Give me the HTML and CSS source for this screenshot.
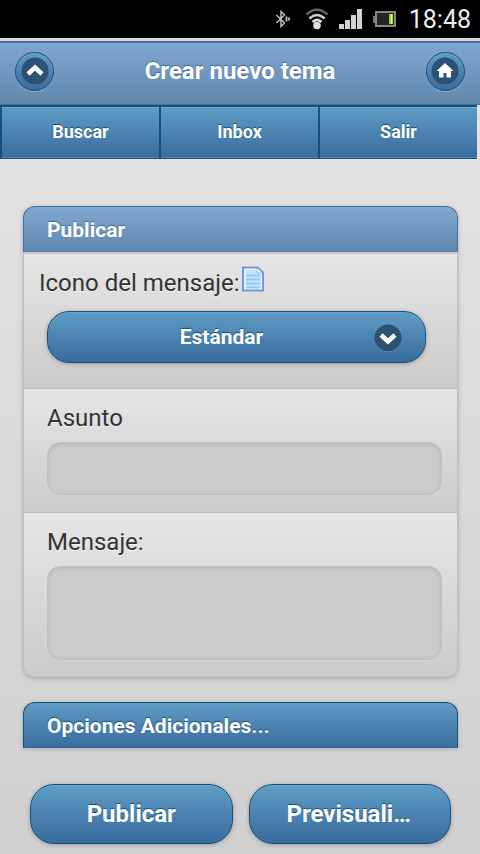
FILE: index.html
```html
<!DOCTYPE html>
<html lang="es">
<head>
<meta charset="utf-8">
<meta name="viewport" content="width=device-width, initial-scale=1">
<title>Crear nuevo tema</title>
<link rel="stylesheet" href="styles.css">
</head>
<body>
<div class="status">
  <svg width="18" height="18" viewBox="0 0 18 18" fill="none" stroke="#c4c4c4" stroke-width="1.400"><path d="M1.500 5l8 8-3.500 3.500V1.500L9.500 5l-8 8"/><path d="M11.500 6.500v5M14 7.500v3" stroke-width="1.800"/></svg>
  <svg class="wifi" width="24" height="22" viewBox="0 0 24 22" fill="none" stroke-width="2.600"><path d="M1.500 6.500Q12-3 22.500 6.500" stroke="#666"/><path d="M4.500 10.500Q12 3.500 19.500 10.500" stroke="#ccc"/><path d="M7.500 14Q12 9.500 16.500 14" stroke="#ddd"/><circle cx="12" cy="17.500" r="3.800" fill="#ddd"/></svg>
  <svg class="signal" width="24" height="20" viewBox="0 0 24 20" fill="#d4d4d4"><path d="M0 15h5v5H0zM6 11h5v9H6zM12 6h5v14h-5zM18 0h5v20h-5z"/></svg>
  <svg class="battery" width="24" height="17" viewBox="0 0 24 17"><path d="M0 5h3v7H0z" fill="#777"/><rect x="3" y="1" width="19" height="14" fill="#252525" stroke="#888" stroke-width="2"/><path d="M16 3h4v10h-4z" fill="#9bd51d"/><path d="M18 3h1v10h-1z" fill="#d9ff70"/></svg>
  <span class="clock">18:48</span>
</div>
<header class="bar">
  <a class="round" href="#subir" aria-label="Subir"><svg width="28" height="28" viewBox="0 0 28 28"><circle cx="14" cy="14" r="13.500" fill="#2b5272"/><path d="M7 17l7-6.500 7 6.500" fill="none" stroke="#fff" stroke-width="4.500"/></svg></a>
  <h1>Crear nuevo tema</h1>
  <a class="round" href="#inicio" aria-label="Inicio"><svg width="28" height="28" viewBox="0 0 28 28"><circle cx="14" cy="14" r="13.500" fill="#2b5272"/><path d="M14 6l8.500 8h-2.500v6.500h-4.500V16h-3v4.500H8V14H5.500z" fill="#fff"/></svg></a>
</header>
<nav class="tabs"><a href="#buscar">Buscar</a><a href="#inbox">Inbox</a><a href="#salir">Salir</a></nav>
<main>
  <form>
    <div class="card">
      <h2 class="heading">Publicar</h2>
      <div class="row first">
        <div class="line"><label for="icono">Icono del mensaje:</label><svg width="24" height="26" viewBox="0 0 24 26"><path d="M2 1.500h14.500l5.500 5v18H2z" fill="#eaf6ff" stroke="#6f9cd9" stroke-width="2"/><path d="M4.500 4H15v4h5v14H4.500z" fill="#c6e5fd"/><path d="M16 2v5h5" fill="#fff" stroke="#86b0e2"/><path d="M5 9.500h14M5 13.500h14M5 17.500h14M5 21.500h14" stroke="#8ccbfa" stroke-width="2"/></svg></div>
        <div class="picker">
          <select id="icono"><option>Estándar</option></select>
          <svg class="arrow" width="28" height="28" viewBox="0 0 28 28"><circle cx="14" cy="15" r="13" fill="#7fa9cc"/><circle cx="14" cy="14" r="13.500" fill="#2b5272"/><path d="M7 11l7 6.500 7-6.500" fill="none" stroke="#fff" stroke-width="4.500"/></svg>
        </div>
      </div>
      <div class="row">
        <label for="asunto">Asunto</label>
        <input id="asunto" type="text">
      </div>
      <div class="row">
        <label for="mensaje">Mensaje:</label>
        <textarea id="mensaje"></textarea>
      </div>
    </div>
    <h2 class="heading options"><a href="#opciones">Opciones Adicionales...</a></h2>
    <div class="actions">
      <button type="submit"><span>Publicar</span></button>
      <button type="button"><span>Previsualizar</span></button>
    </div>
  </form>
</main>
</body>
</html>
```
FILE: styles.css
```css
* { box-sizing: border-box; }
body {
  margin: 0;
  min-height: 100vh;
  font-family: Roboto, sans-serif;
  font-size: 24px;
  color: #333;
  text-shadow: 0 1px 0 #f3f3f3;
  background: linear-gradient(#e6e6e6, #d0d0d0);
}
svg { display: block; flex: none; }
a { color: inherit; text-decoration: none; }

.status {
  display: flex;
  align-items: center;
  justify-content: flex-end;
  height: 38px;
  padding-right: 9px;
  background: #000;
  color: #eee;
  text-shadow: none;
}
.wifi { margin-left: 12px; }
.signal { margin-left: 10px; }
.battery { margin-left: 10px; }
.clock { margin-left: 12px; font-size: 25px; }

.bar {
  display: flex;
  align-items: center;
  justify-content: space-between;
  height: 67px;
  padding: 0 15px;
  border-top: 3px solid #d8d6cf;
  background: linear-gradient(#81a8d0, #5e87ae);
  box-shadow: inset 0 2px 0 #456f9f, inset 0 -1px 0 #457492;
}
h1, h2 { margin: 0; font-weight: 700; color: #fff; }
h1 {
  margin-bottom: 4px;
  font-size: 24px;
  line-height: 32px;
  text-shadow: 0 -1px 1px #3e6790;
}
.round {
  display: grid;
  place-items: center;
  width: 39px;
  height: 39px;
  margin-bottom: 4px;
  border: 1px solid #145072;
  border-radius: 50%;
  background: linear-gradient(#5f9cc5, #396b9e);
  box-shadow: 0 1px 1px #8db4d4, inset 0 1px 0 #78afd0;
}

.tabs {
  display: grid;
  grid-template-columns: repeat(3, minmax(0, 1fr));
  margin-right: 3px;
}
.tabs a {
  height: 54px;
  border-top: 2px solid #155078;
  border-bottom: 1px solid #155078;
  border-left: 2px solid #155078;
  background: linear-gradient(#5f9cc5, #396b9e);
  box-shadow: inset 0 1px 0 #71aad0, inset 0 -1px 0 #5685b0;
  color: #fff;
  font-size: 18px;
  font-weight: 700;
  line-height: 50px;
  text-align: center;
  text-shadow: 0 -1px 1px #145072;
}

main { padding: 47px 22px 11px 23px; }
.card {
  border-radius: 12px;
  box-shadow: 0 1px 4px #aaa;
}
.heading {
  height: 46px;
  padding: 0 23px;
  border: 1px solid #456f9f;
  border-bottom: 0;
  border-radius: 12px 12px 0 0;
  background: linear-gradient(#81a8d0, #5e87ae);
  font-size: 21px;
  line-height: 46px;
  text-shadow: 0 -1px 1px #3e6790;
}
.options {
  margin-top: 24px;
  border-color: #145072;
  background: linear-gradient(#5f9cc5, #396b9e);
  box-shadow: 0 1px 4px #aaa;
  text-shadow: 0 -1px 1px #145072;
}
.row {
  padding: 12px 15px 17px 23px;
  border: 1px solid #bfbfbf;
  border-bottom: 0;
  background: linear-gradient(#e6e6e6, #cbcbcb);
}
.row:last-child { border-bottom: 1px solid #b3b3b3; border-radius: 0 0 12px 12px; }
.row.first { padding: 12px 31px 25px 15px; border-top: 2px solid #c8c8c8; }
.row > label { display: block; }
.row label { line-height: 34px; }
.line { display: flex; gap: 2px; }
.picker {
  position: relative;
  margin: 11px 0 0 8px;
}
select, button {
  width: 100%;
  border: 1px solid #145072;
  border-radius: 22px;
  background: linear-gradient(#5f9cc5, #396b9e);
  box-shadow: 0 1px 4px #999, inset 0 1px 0 #6ba5cd;
  color: #fff;
  font-family: inherit;
  font-weight: 700;
  text-shadow: 0 -1px 1px #145072;
}
select {
  display: block;
  appearance: none;
  height: 52px;
  padding: 0 53px 0 23px;
  font-size: 21px;
  text-align-last: center;
}
.arrow {
  position: absolute;
  top: 13px;
  right: 24px;
  pointer-events: none;
}
input, textarea {
  display: block;
  width: 100%;
  height: 53px;
  margin-top: 7px;
  padding: 8px 12px;
  border: 1px solid #c1c1c1;
  border-radius: 13px;
  background: #ccc;
  box-shadow: inset 0 1px 4px #b0b0b0, 0 0 2px #ddd;
  font: inherit;
  resize: none;
}
textarea { height: 94px; }

.actions {
  display: grid;
  grid-template-columns: repeat(2, minmax(0, 1fr));
  gap: 16px;
  padding: 36px 7px 0;
}
button { height: 60px; padding: 0 37px; border-radius: 24px; font-size: 24px; }
button span {
  display: block;
  overflow: hidden;
  line-height: 34px;
  text-overflow: ellipsis;
  white-space: nowrap;
}
```
